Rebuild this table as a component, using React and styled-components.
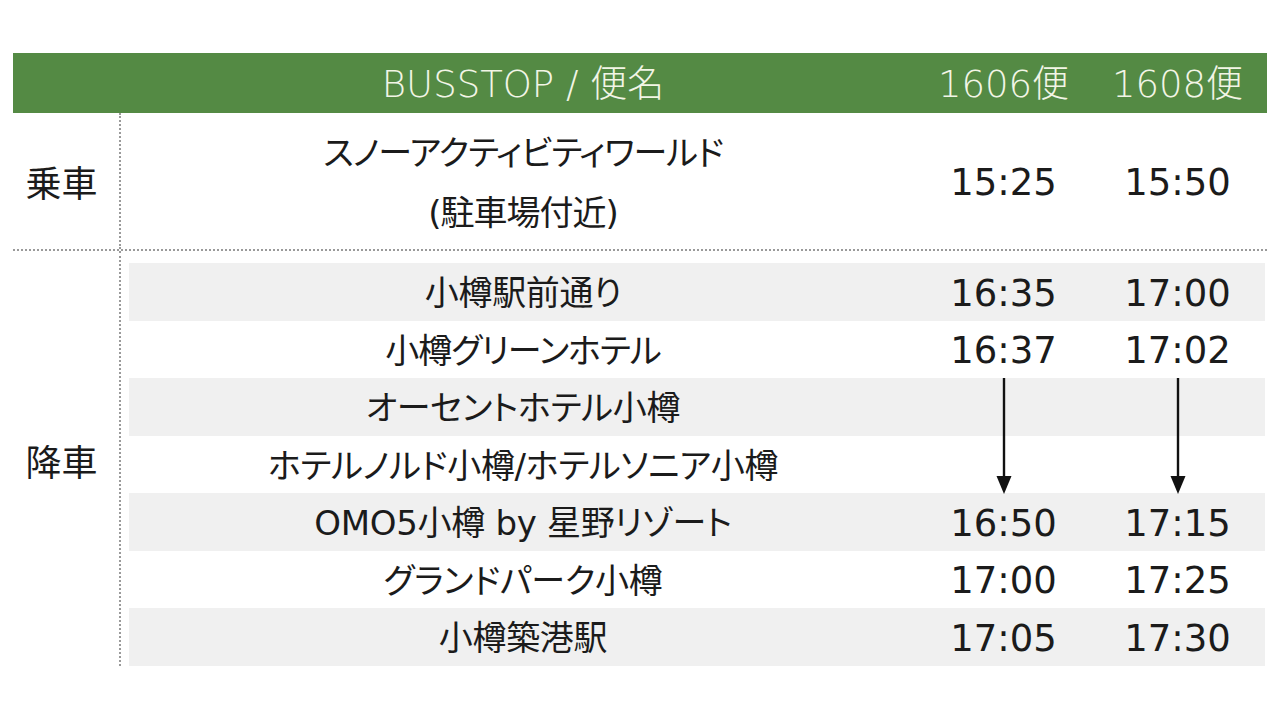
import styled, { createGlobalStyle } from "styled-components";

const GlobalStyle = createGlobalStyle`
    body {
        margin: 0;
        background: #ffffff;
        font-family: "DejaVu Sans", "Noto Sans CJK JP", sans-serif;
        color: #1b1b1b;
    }
`;

const COLS = "788px 173px 175px";

const Page = styled.div`
    width: 1254px;
    padding: 53px 0 0 13px;
`;

const Header = styled.div`
    display: grid;
    grid-template-columns: 116px ${COLS};
    height: 60px;
    align-items: center;
    background: #548a44;
    color: #f2f5e6;
    font-size: 37px;
    font-weight: 300;
    font-feature-settings: "palt";
`;

const HeadCell = styled.div`
    text-align: center;
    line-height: 1;
    padding-top: 2px;
`;

const Section = styled.div`
    display: grid;
    grid-template-columns: 106px 1fr;
    border-bottom: ${props => (props.divided ? "2px dotted #9a9a9a" : "none")};
`;

const Label = styled.div`
    display: flex;
    align-items: center;
    justify-content: center;
    padding-right: 9px;
    font-family: "Noto Sans CJK JP", sans-serif;
    font-size: 36px;
    margin-top: ${props => props.shift || 0}px;
`;

const Body = styled.div`
    border-left: 2px dotted #9a9a9a;
    padding: ${props => props.pad} 2px 0 8px;
`;

const Row = styled.div`
    box-sizing: border-box;
    display: grid;
    grid-template-columns: ${COLS};
    align-items: center;
    height: ${props => props.h || 57.5}px;
    padding-bottom: ${props => props.lift || 0}px;
    background: ${props => (props.shaded ? "#f0f0f0" : "transparent")};
    font-feature-settings: "palt";
`;

const Name = styled.div`
    text-align: center;
    font-size: 34px;
    line-height: 60px;
    letter-spacing: ${props => (props.tight ? "-1px" : "-0.3px")};
    white-space: nowrap;
`;

const Time = styled.div`
    position: relative;
    align-self: stretch;
    display: flex;
    align-items: center;
    justify-content: center;
    font-size: 37px;
`;

const ArrowWrap = styled.svg`
    position: absolute;
    top: 0;
    left: 50%;
    transform: translateX(-50%);
    overflow: visible;
`;

const DownArrow = () => (
    <ArrowWrap width="16" height="116" viewBox="0 0 16 116">
        <line x1="8" y1="0" x2="8" y2="100" stroke="#111" strokeWidth="2.4" />
        <polygon points="0.5,98 15.5,98 8,116" fill="#111" />
    </ArrowWrap>
);

const stops = [
    { name: "小樽駅前通り", a: "16:35", b: "17:00" },
    { name: "小樽グリーンホテル", a: "16:37", b: "17:02", tight: true },
    { name: "オーセントホテル小樽", arrow: true },
    { name: "ホテルノルド小樽/ホテルソニア小樽" },
    { name: "OMO5小樽 by 星野リゾート", a: "16:50", b: "17:15" },
    { name: "グランドパーク小樽", a: "17:00", b: "17:25" },
    { name: "小樽築港駅", a: "17:05", b: "17:30" },
];

export default function App() {
    return (
        <Page>
            <GlobalStyle />
            <Header>
                <span />
                <HeadCell>BUSSTOP / 便名</HeadCell>
                <HeadCell>1606便</HeadCell>
                <HeadCell>1608便</HeadCell>
            </Header>

            <Section divided>
                <Label>乗車</Label>
                <Body pad="9px">
                    <Row h={127} lift={6}>
                        <Name tight>
                            スノーアクティビティワールド
                            <br />
                            (駐車場付近)
                        </Name>
                        <Time>15:25</Time>
                        <Time>15:50</Time>
                    </Row>
                </Body>
            </Section>

            <Section>
                <Label shift={4}>降車</Label>
                <Body pad="12px">
                    {stops.map((s, i) => (
                        <Row key={s.name} shaded={i % 2 === 0}>
                            <Name tight={s.tight}>{s.name}</Name>
                            <Time>
                                {s.a}
                                {s.arrow && <DownArrow />}
                            </Time>
                            <Time>
                                {s.b}
                                {s.arrow && <DownArrow />}
                            </Time>
                        </Row>
                    ))}
                </Body>
            </Section>
        </Page>
    );
}
